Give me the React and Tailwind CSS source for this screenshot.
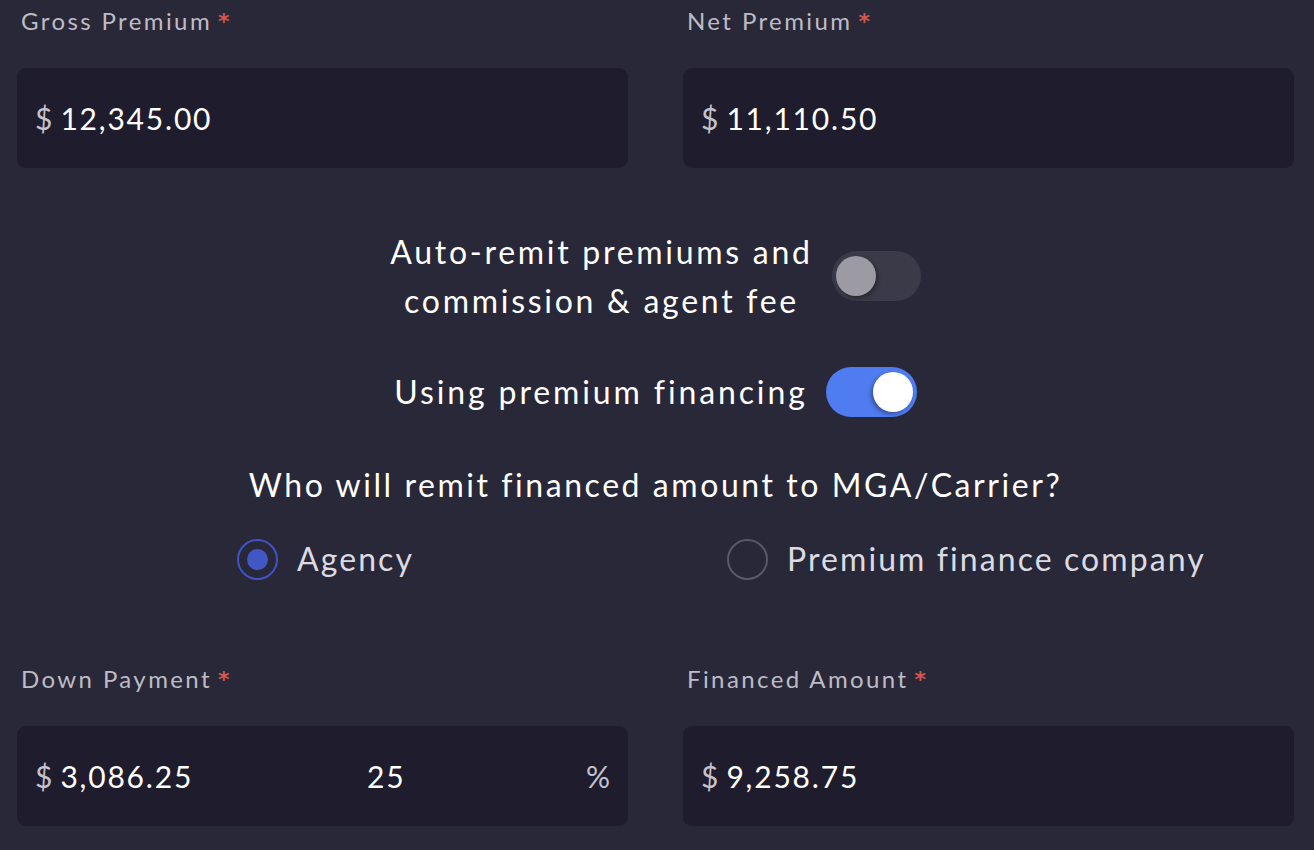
import {useState} from "react";

function Label({children}) {
    return (
        <div className="flex h-[42px] items-center pl-1 text-[24px] tracking-[0.1em] text-[#bdbcc6]">
            <span>{children}</span>
            <span className="ml-[6px] font-['DejaVu_Sans',sans-serif] text-[22px] font-bold tracking-normal text-[#d2574f]">*</span>
        </div>
    );
}

function MoneyInput({value, children}) {
    return (
        <div className="mt-[26px] flex h-[100px] items-center rounded-[9px] bg-[#1f1c2d] px-[18px]">
            <div className="flex w-[332px] items-center">
                <span className="text-[30px] text-[#c4c3cc]">$</span>
                <span className="ml-[8px] text-[30px] tracking-[0.06em] text-white">{value}</span>
            </div>
            {children}
        </div>
    );
}

function Toggle({on, onClick}) {
    return (
        <button
            onClick={onClick}
            className={on
                ? "relative h-[50px] w-[91px] shrink-0 rounded-full bg-[#4f7cf0]"
                : "relative h-[50px] w-[89px] shrink-0 rounded-full bg-[#3b3a48]"}
        >
            <span
                className={on
                    ? "absolute right-[4px] top-[5px] h-[40px] w-[40px] rounded-full bg-white shadow-[-2px_2px_4px_rgba(0,0,0,0.35)]"
                    : "absolute left-[4px] top-[5px] h-[40px] w-[40px] rounded-full bg-[#9c9ba4] shadow-[2px_2px_4px_rgba(0,0,0,0.35)]"}
            />
        </button>
    );
}

function Radio({checked, label, onClick}) {
    return (
        <button onClick={onClick} className="flex items-center gap-[19px]">
            <span
                className={checked
                    ? "flex h-[41px] w-[41px] items-center justify-center rounded-full border-2 border-[#3f53c4]"
                    : "flex h-[41px] w-[41px] items-center justify-center rounded-full border-2 border-[#5a5966]"}
            >
                {checked && <span className="h-[21px] w-[21px] rounded-full bg-[#4257c6]"/>}
            </span>
            <span className="text-[32px] tracking-[0.065em] text-[#dcdbe2]">{label}</span>
        </button>
    );
}

export default function App() {
    const [autoRemit, setAutoRemit] = useState(false);
    const [financing, setFinancing] = useState(true);
    const [remitter, setRemitter] = useState("agency");

    return (
        <div className="h-[850px] w-full overflow-hidden bg-[#292838] pl-[17px] pr-[20px] font-['Lato',sans-serif]">
            <div className="grid grid-cols-2 gap-x-[55px]">
                <div>
                    <Label>Gross Premium</Label>
                    <MoneyInput value="12,345.00"/>
                </div>
                <div>
                    <Label>Net Premium</Label>
                    <MoneyInput value="11,110.50"/>
                </div>
            </div>

            <div className="mt-[59px] flex items-center justify-center gap-[19px]">
                <div className="text-center text-[32px] leading-[49px] tracking-[0.085em] text-white">
                    Auto-remit premiums and<br/>commission &amp; agent fee
                </div>
                <Toggle on={autoRemit} onClick={() => setAutoRemit(!autoRemit)}/>
            </div>

            <div className="mt-[42px] flex items-center justify-center gap-[18px]">
                <div className="text-[32px] tracking-[0.09em] text-white">Using premium financing</div>
                <Toggle on={financing} onClick={() => setFinancing(!financing)}/>
            </div>

            <div className="mt-[44px] text-center text-[32px] tracking-[0.08em] text-white">
                Who will remit financed amount to MGA/Carrier?
            </div>

            <div className="mt-[26px] grid grid-cols-2 gap-x-[55px]">
                <div className="flex pl-[220px]">
                    <Radio checked={remitter === "agency"} label="Agency" onClick={() => setRemitter("agency")}/>
                </div>
                <div className="flex pl-[44px]">
                    <Radio checked={remitter === "pfc"} label="Premium finance company"
                           onClick={() => setRemitter("pfc")}/>
                </div>
            </div>

            <div className="mt-[75px] grid grid-cols-2 gap-x-[55px]">
                <div>
                    <Label>Down Payment</Label>
                    <MoneyInput value="3,086.25">
                        <span className="text-[30px] tracking-[0.06em] text-white">25</span>
                        <span className="ml-auto text-[30px] text-[#c4c3cc]">%</span>
                    </MoneyInput>
                </div>
                <div>
                    <Label>Financed Amount</Label>
                    <MoneyInput value="9,258.75"/>
                </div>
            </div>
        </div>
    );
}
